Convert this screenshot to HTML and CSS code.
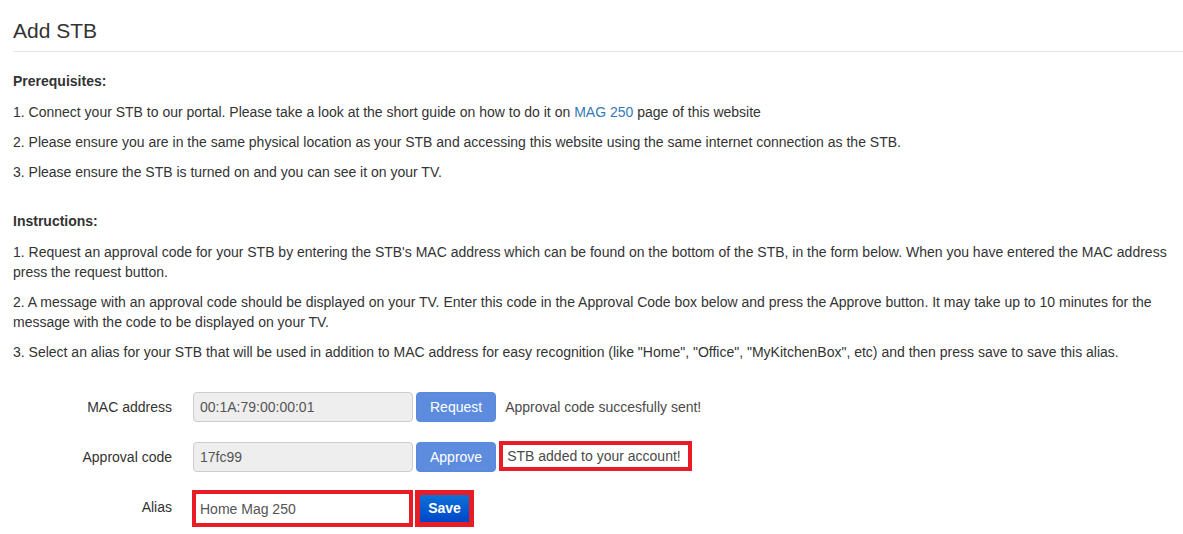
FILE: index.html
```html
<!DOCTYPE html>
<html lang="en">
<head>
<meta charset="utf-8">
<title>Add STB</title>
<link rel="stylesheet" href="styles.css">
</head>
<body>
<div class="page">
  <h3 class="page-title">Add STB</h3>

  <section class="block">
    <p class="block-title">Prerequisites:</p>
    <p>1. Connect your STB to our portal. Please take a look at the short guide on how to do it on <a href="#" class="link">MAG 250</a> page of this website</p>
    <p>2. Please ensure you are in the same physical location as your STB and accessing this website using the same internet connection as the STB.</p>
    <p>3. Please ensure the STB is turned on and you can see it on your TV.</p>
  </section>

  <section class="block block-spaced">
    <p class="block-title">Instructions:</p>
    <p>1. Request an approval code for your STB by entering the STB's MAC address which can be found on the bottom of the STB, in the form below. When you have entered the MAC address press the request button.</p>
    <p>2. A message with an approval code should be displayed on your TV. Enter this code in the Approval Code box below and press the Approve button. It may take up to 10 minutes for the message with the code to be displayed on your TV.</p>
    <p>3. Select an alias for your STB that will be used in addition to MAC address for easy recognition (like "Home", "Office", "MyKitchenBox", etc) and then press save to save this alias.</p>
  </section>

  <form class="stb-form">
    <div class="form-row">
      <label class="form-label">MAC address</label>
      <input class="form-input" type="text" value="00:1A:79:00:00:01" disabled>
      <button type="button" class="btn btn-light">Request</button>
      <span class="form-msg">Approval code succesfully sent!</span>
    </div>
    <div class="form-row">
      <label class="form-label">Approval code</label>
      <input class="form-input" type="text" value="17fc99" disabled>
      <button type="button" class="btn btn-light">Approve</button>
      <span class="form-msg form-msg-marked">STB added to your account!</span>
    </div>
    <div class="form-row">
      <label class="form-label">Alias</label>
      <input class="form-input form-input-marked" type="text" value="Home Mag 250">
      <span class="save-mark"><button type="button" class="btn-save">Save</button></span>
    </div>
  </form>
</div>
</body>
</html>
```

FILE: styles.css
```css
html, body {
  margin: 0;
  padding: 0;
  background: #ffffff;
}

body {
  font-family: "Liberation Sans", Arial, sans-serif;
  font-size: 14px;
  line-height: 20px;
  color: #333333;
}

.page {
  padding: 0 0 0 13px;
}

.page-title {
  margin: 20px 0 19px;
  padding-bottom: 9px;
  border-bottom: 1px solid #e6e6e6;
  font-size: 21px;
  font-weight: normal;
  line-height: 22px;
  color: #333333;
}

.block p {
  margin: 0 0 10px;
}

.block .block-title {
  font-weight: bold;
  margin-bottom: 11px;
}

.block-spaced {
  margin-top: 29px;
}

.link {
  color: #337ab7;
  text-decoration: none;
}

.stb-form {
  margin-top: 30px;
}

.form-row {
  display: flex;
  align-items: center;
  height: 30px;
  margin-bottom: 20px;
}

.form-label {
  width: 159px;
  margin-right: 21px;
  text-align: right;
  color: #333333;
  flex: none;
}

.form-input {
  box-sizing: border-box;
  width: 220px;
  height: 30px;
  padding: 0 6px;
  border: 1px solid #cccccc;
  border-radius: 4px;
  background: #eeeeee;
  font-family: "Liberation Sans", Arial, sans-serif;
  font-size: 14px;
  color: #555555;
  flex: none;
}

.form-input:disabled {
  color: #555555;
  -webkit-text-fill-color: #555555;
  opacity: 1;
}

.btn {
  box-sizing: border-box;
  height: 30px;
  margin-left: 3px;
  padding: 0 13px;
  border: 1px solid #5a88dc;
  border-radius: 4px;
  background: #5d8cdf;
  color: #ffffff;
  font-family: "Liberation Sans", Arial, sans-serif;
  font-size: 14px;
  line-height: 28px;
  flex: none;
}

.form-msg {
  margin-left: 9px;
  color: #4a4a4a;
  white-space: nowrap;
}

.form-msg-marked {
  box-sizing: border-box;
  width: 193px;
  height: 30px;
  margin-left: 3px;
  padding: 0 0 0 4px;
  border: 4px solid #e81c24;
  line-height: 22px;
  margin-top: -2px;
}

.form-input-marked {
  width: 221px;
  height: 37px;
  margin-left: -1px;
  margin-top: 3px;
  padding: 0 4px 0 4px;
  border: 4px solid #e81c24;
  border-radius: 0;
  background: #ffffff;
}

.save-mark {
  box-sizing: border-box;
  display: flex;
  width: 59px;
  height: 37px;
  margin-left: 2px;
  margin-top: 3px;
  border: 5px solid #e81c24;
  flex: none;
}

.btn-save {
  flex: 1;
  margin: 0;
  padding: 0;
  border: 0;
  border-radius: 0;
  background: linear-gradient(to bottom, #0d72d8, #0047c9);
  color: #ffffff;
  font-family: "Liberation Sans", Arial, sans-serif;
  font-size: 14px;
  font-weight: bold;
  line-height: 27px;
}
```
